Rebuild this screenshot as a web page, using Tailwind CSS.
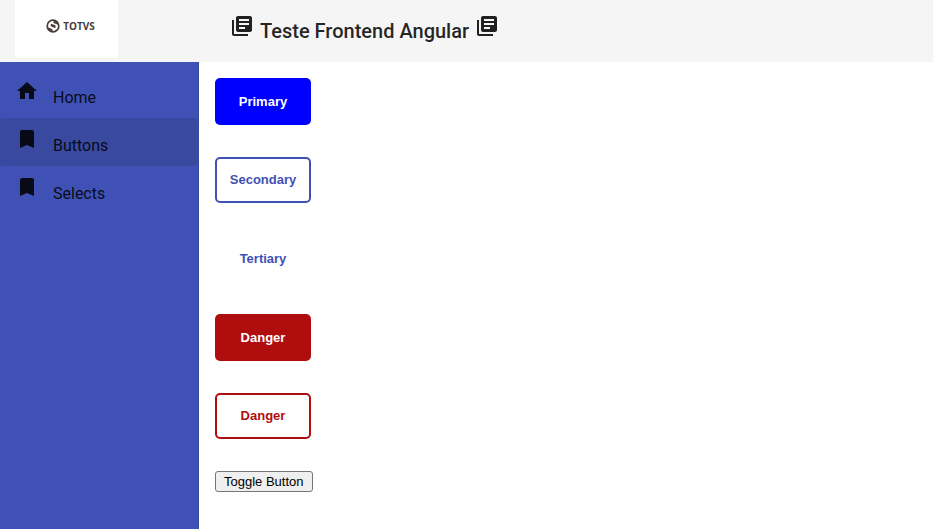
<!DOCTYPE html>
<html lang="pt-BR">
<head>
<meta charset="utf-8">
<meta name="viewport" content="width=device-width, initial-scale=1">
<title>Teste Frontend Angular</title>
<script src="https://cdn.jsdelivr.net/npm/@tailwindcss/browser@4"></script>
</head>
<body class="flex min-h-screen flex-col bg-white font-[Roboto,sans-serif] text-black/87">
<svg class="hidden" aria-hidden="true">
  <symbol id="library" viewBox="0 0 24 24"><path d="M4 6H2v14c0 1.100.9 2 2 2h14v-2H4V6zm16-4H8c-1.100 0-2 .9-2 2v12c0 1.100.9 2 2 2h12c1.100 0 2-.9 2-2V4c0-1.100-.9-2-2-2zm-1 9H9V9h10v2zm-4 4H9v-2h6v2zm4-8H9V5h10v2z"/></symbol>
  <symbol id="home" viewBox="0 0 24 24"><path d="M10 20v-6h4v6h5v-8h3L12 3 2 12h3v8z"/></symbol>
  <symbol id="bookmark" viewBox="0 0 24 24"><path d="M17 3H7c-1.100 0-2 .9-2 2v16l7-3 7 3V5c0-1.100-.9-2-2-2z"/></symbol>
</svg>
<header class="flex items-start bg-[#f5f5f5] pb-1 pl-[15px]">
  <a href="#" aria-label="TOTVS" class="flex h-[58px] w-[103px] items-start justify-center gap-[3px] bg-white pt-[19px] pl-2 text-[#4a3d38]">
    <svg class="h-3.5 w-3.5" viewBox="0 0 14 14" fill="none" stroke="currentColor"><circle cx="7" cy="7" r="5.800" stroke-width="1.700"/><path fill="currentColor" stroke="none" d="M4.800 4.800 9.500 6.300 9.500 9.300 4.800 7.300zM1.500 8 6.500 10.200 6.500 12.500 3 11zM7.500 1.500 11 3 12.500 6 7.500 3.900z"/></svg>
    <span class="font-[Open_Sans,sans-serif] text-[10px] leading-[14px] font-bold">TOTVS</span>
  </a>
  <h1 class="ml-28 flex items-start gap-1.5 pt-3.5 text-xl leading-[34px] font-medium">
    <svg class="h-6 w-6 fill-current"><use href="#library"/></svg>
    <span>Teste Frontend Angular</span>
    <svg class="h-6 w-6 fill-current"><use href="#library"/></svg>
  </h1>
</header>
<div class="flex flex-1">
  <nav class="w-[199px] shrink-0 border-r border-[#394a9f] bg-[#3f51b5] pt-2">
    <a href="#home" class="flex h-12 items-start gap-3.5 rounded pt-[9px] pl-[15px] text-base leading-[38px]">
      <svg class="h-6 w-6 fill-current"><use href="#home"/></svg><span>Home</span></a>
    <a href="#buttons" aria-current="page" class="flex h-12 items-start gap-3.5 rounded bg-[#39499f] pt-[9px] pl-[15px] text-base leading-[38px]">
      <svg class="h-6 w-6 fill-current"><use href="#bookmark"/></svg><span>Buttons</span></a>
    <a href="#selects" class="flex h-12 items-start gap-3.5 rounded pt-[9px] pl-[15px] text-base leading-[38px]">
      <svg class="h-6 w-6 fill-current"><use href="#bookmark"/></svg><span>Selects</span></a>
  </nav>
  <main class="flex flex-1 flex-col items-start gap-8 p-4 font-[Liberation_Sans,Arial,sans-serif] text-[13px]">
    <button class="h-[47px] w-24 rounded-[5px] bg-[#0000ff] font-bold text-white">Primary</button>
    <button class="h-[46px] w-24 rounded-[5px] border-2 border-[#3f51b5] font-bold text-[#3f51b5]">Secondary</button>
    <button class="h-[47px] w-24 rounded-[5px] font-bold text-[#3f51b5]">Tertiary</button>
    <button class="h-[47px] w-24 rounded-[5px] bg-[#b00e0e] font-bold text-white">Danger</button>
    <button class="h-[46px] w-24 rounded-[5px] border-2 border-[#b00e0e] font-bold text-[#b00e0e]">Danger</button>
    <button class="h-[21px] rounded-[3px] border border-[#767676] bg-[#efefef] px-2 text-black">Toggle Button</button>
  </main>
</div>
</body>
</html>
